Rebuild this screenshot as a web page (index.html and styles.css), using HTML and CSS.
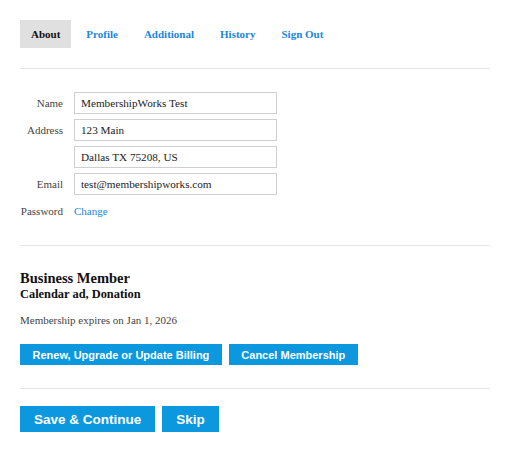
FILE: index.html
```html
<!DOCTYPE html>
<html>
<head>
<meta charset="utf-8">
<link rel="stylesheet" href="styles.css">
</head>
<body>
<div class="page">
  <nav class="tabs">
    <a class="tab active">About</a>
    <a class="tab">Profile</a>
    <a class="tab">Additional</a>
    <a class="tab">History</a>
    <a class="tab">Sign Out</a>
  </nav>
  <hr class="rule rule-top">
  <div class="form">
    <div class="row"><label class="label">Name</label><div class="input">MembershipWorks Test</div></div>
    <div class="row"><label class="label">Address</label><div class="input">123 Main</div></div>
    <div class="row"><label class="label"></label><div class="input">Dallas TX 75208, US</div></div>
    <div class="row"><label class="label">Email</label><div class="input">test@membershipworks.com</div></div>
    <div class="row"><label class="label">Password</label><a class="link">Change</a></div>
  </div>
  <hr class="rule rule-mid">
  <div class="membership">
    <div class="plan">Business Member</div>
    <div class="addons">Calendar ad, Donation</div>
    <p class="expires">Membership expires on Jan 1, 2026</p>
    <div class="actions">
      <a class="btn">Renew, Upgrade or Update Billing</a>
      <a class="btn">Cancel Membership</a>
    </div>
  </div>
  <hr class="rule rule-bottom">
  <div class="footer-actions">
    <a class="btn btn-lg">Save &amp; Continue</a>
    <a class="btn btn-lg">Skip</a>
  </div>
</div>
</body>
</html>
```
FILE: styles.css
```css
html, body {
  margin: 0;
  padding: 0;
  background: #fff;
}
body {
  font-family: "Liberation Serif", "Times New Roman", serif;
  color: #222;
}
.page {
  padding: 20px 20px 0 20px;
  width: 470px;
}
.tabs {
  display: flex;
  gap: 4px;
  height: 28px;
}
.tab {
  display: flex;
  align-items: center;
  padding: 0 11px 1px 11px;
  font-size: 11px;
  font-weight: bold;
  color: #1a86dc;
}
.tab.active {
  background: #e0e0e0;
  color: #111;
}
.rule {
  border: 0;
  border-top: 1px solid #e6e6e6;
  margin: 0;
}
.rule-top { margin-top: 20px; }
.form {
  padding-top: 23px;
  display: flex;
  flex-direction: column;
  gap: 5px;
}
.row {
  display: flex;
  align-items: center;
  height: 22px;
}
.label {
  width: 43px;
  text-align: right;
  font-size: 11px;
  color: #444;
  margin-right: 11px;
}
.input {
  box-sizing: border-box;
  width: 203px;
  height: 22px;
  border: 1px solid #cfcfcf;
  padding: 0 6px;
  font-size: 11.2px;
  line-height: 20px;
  color: #222;
}
.link {
  font-size: 11px;
  color: #1a86dc;
}
.rule-mid { margin-top: 23px; }
.membership {
  padding-top: 23px;
}
.plan {
  font-size: 14.5px;
  font-weight: bold;
  line-height: 18px;
  color: #111;
}
.addons {
  font-size: 12.4px;
  font-weight: bold;
  line-height: 14px;
  color: #111;
}
.expires {
  margin: 12px 0 0 0;
  font-size: 11px;
  line-height: 14px;
  color: #444;
}
.actions {
  display: flex;
  gap: 7px;
  margin-top: 17px;
}
.btn {
  display: flex;
  align-items: center;
  justify-content: center;
  background: #0b98de;
  color: #fff;
  font-family: "Liberation Sans", Arial, sans-serif;
  font-weight: bold;
  font-size: 11px;
  height: 21px;
  padding: 0 12.5px;
}
.rule-bottom { margin-top: 23px; }
.footer-actions {
  display: flex;
  gap: 7px;
  margin-top: 17px;
}
.btn-lg {
  font-size: 13.5px;
  height: 26px;
  padding: 0 14px;
}
```
